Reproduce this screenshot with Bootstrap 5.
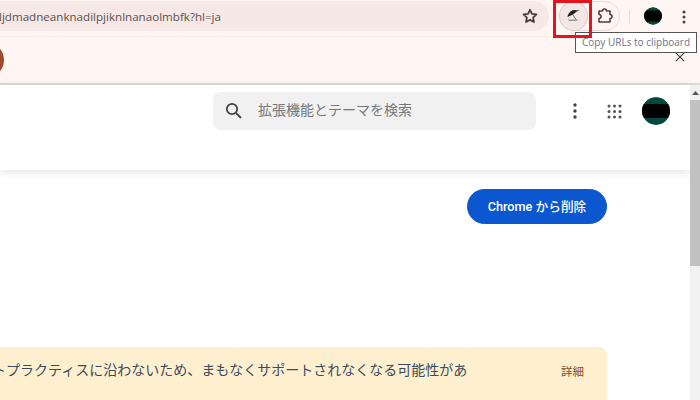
<!DOCTYPE html>
<html lang="ja">
<head>
    <meta charset="UTF-8">
    <title>Chrome Web Store</title>
    <link href="https://cdn.jsdelivr.net/npm/bootstrap@5.3.0/dist/css/bootstrap.min.css" rel="stylesheet">
    <style>
        html, body { height: 400px; overflow: hidden; }
        body { background: #fff; font-family: "Open Sans", "Noto Sans CJK JP", sans-serif; }
        .shell { width: 700px; height: 400px; position: relative; overflow: hidden; }

        /* browser chrome */
        .toolbar { height: 37px; background: #fff5f3; border-bottom: 1px solid #fde9e4; padding-top: 1px; }
        .omnibox { width: 550px; height: 30px; margin-left: -1px; background: #f5e8e6; border-radius: 0 15px 15px 0; padding-right: 8px; overflow: hidden; }
        .omni-url { flex: 1; min-width: 0; padding-top: 2px; font-size: 11.6px; color: #5c4f4d; white-space: nowrap; overflow: hidden; }
        .ext-pill { margin-left: 10px; height: 30px; width: 61px; border: 1px solid #eadcd8; border-radius: 15px; }
        .ext-active { width: 30px; height: 30px; margin: -1px 0 -1px -1px; background: #f3e6e3; border: 1px solid #dccfcb; border-radius: 50%; }
        .ext-puzzle { width: 30px; height: 28px; margin-left: 3px; }
        .tb-sep { width: 1px; height: 14px; background: #f8d5cc; margin: 9px 14px 0 9px; }
        .tb-avatar { width: 18px; height: 18px; margin-top: 6px; border-radius: 50%; }
        .tb-menu { margin: 9px 0 0 20px; width: 4px; }

        .infobar { height: 46px; background: #fff6f4; padding-top: 5px; }
        .info-badge { width: 36px; height: 36px; margin-left: -32px; background: #9c4a2e; border-radius: 50%; }
        .info-close { margin-left: auto; margin-right: 15px; margin-top: 10px; width: 10px; height: 10px; }

        /* tooltip and highlight lie over the toolbar */
        .url-tip { position: absolute; left: 575px; top: 32px; height: 21px; width: 122px; background: #fff; border: 1px solid #555; font-size: 10px; line-height: 19px; text-align: center; color: #6b7488; white-space: nowrap; }
        .red-box { position: absolute; left: 553px; top: 0; width: 39px; height: 38px; border: 3px solid #e5131d; }

        /* page */
        .view { height: 317px; border-top: 2px solid #dcdcdc; }
        .page-main { flex: 1; min-width: 0; }
        .store-head { height: 85px; padding-top: 7px; box-shadow: 0 2px 8px rgba(60, 64, 67, .15); }
        .search-box { margin-left: 213px; width: 323px; height: 38px; background: #f1f1f1; border-radius: 8px; padding-left: 12px; }
        .search-text { margin-left: 15px; padding-bottom: 3px; font-size: 14px; color: #777; }
        .head-tools { margin: 5px 0 0 37px; }
        .head-grid { margin-left: 30px; }
        .head-avatar { margin-left: 20px; width: 28px; height: 28px; border-radius: 50%; }
        .remove-row { width: 607px; padding-top: 19px; }
        .btn-remove { width: 140px; height: 35px; padding: 0; background: #0b57d0; border-color: #0b57d0; border-radius: 18px; font-family: Roboto, "Noto Sans CJK JP", sans-serif; font-size: 12.7px; font-weight: 500; color: #fff; }
        .warn-box { width: 607px; height: 70px; margin-top: 123px; background: #feefcf; border-radius: 0 8px 8px 0; padding: 12px 23px 0 0; font-size: 14px; color: #3c4a5e; white-space: nowrap; }
        .warn-text { flex: 1; min-width: 0; margin-left: -8px; }
        .warn-link { font-size: 11.5px; color: #8f4a2e; margin-top: 4px; margin-left: 20px; }

        .scroll-track { width: 10px; background: #f1f1f1; }
        .scroll-arrow { height: 15px; color: #555; }
        .scroll-thumb { height: 166px; background: #c1c1c1; }
    </style>
</head>
<body>
    <div class="shell">
        <!-- Browser toolbar -->
        <div class="toolbar d-flex align-items-start">
            <div class="omnibox d-flex align-items-center">
                <div class="omni-url">ljdmadneanknadilpjiknlnanaolmbfk?hl=ja</div>
                <svg width="22" height="22" viewBox="0 0 24 24" fill="none" stroke="#4a3f3d" stroke-width="2" stroke-linejoin="round"><path d="M12 5.200l2.100 4.500 4.900.6-3.600 3.400.9 4.900-4.300-2.400-4.300 2.400.9-4.900L5 10.300l4.900-.6z"/></svg>
            </div>
            <div class="ext-pill d-flex align-items-center">
                <div class="ext-active d-flex align-items-center justify-content-center">
                    <svg width="18" height="18" viewBox="0 0 18 18"><path d="M3.500 10C4 6.500 6.500 3.500 10 3l6 .5c-3 .5-5 2-5.500 3L8 8z" fill="#222"/><path d="M9 8l3 4.500" stroke="#666" stroke-width="1"/><path d="M4 12.500h10l-1 1.500H5z" fill="#999"/></svg>
                </div>
                <div class="ext-puzzle d-flex align-items-center justify-content-center">
                    <svg width="18" height="18" viewBox="0 0 18 18" fill="none" stroke="#5a3b35" stroke-width="1.600" stroke-linejoin="round"><path d="M3 4h3.500a2 2 0 0 1 4 0H14v3.500a2 2 0 0 1 0 4V15H3v-3.500a2 2 0 0 0 0-4z"/></svg>
                </div>
            </div>
            <div class="tb-sep"></div>
            <svg class="tb-avatar" viewBox="0 0 18 18"><circle cx="9" cy="9" r="9" fill="#04493a"/><rect y="3.500" width="18" height="11" fill="#000"/></svg>
            <svg class="tb-menu" height="14" viewBox="0 0 4 14" fill="#4a3f3d"><circle cx="2" cy="2" r="1.500"/><circle cx="2" cy="7" r="1.500"/><circle cx="2" cy="12" r="1.500"/></svg>
        </div>

        <!-- Infobar -->
        <div class="infobar d-flex">
            <div class="info-badge"></div>
            <svg class="info-close" viewBox="0 0 12 12" stroke="#444" stroke-width="1.500"><path d="M1 1l10 10M11 1L1 11"/></svg>
        </div>

        <!-- Page -->
        <div class="view d-flex">
            <div class="page-main">
                <div class="store-head d-flex align-items-start">
                    <div class="search-box d-flex align-items-center">
                        <svg width="18" height="18" viewBox="0 0 18 18" fill="none" stroke="#444" stroke-width="1.800"><circle cx="7" cy="7" r="5.200"/><path d="M11 11l5 5"/></svg>
                        <span class="search-text">拡張機能とテーマを検索</span>
                    </div>
                    <div class="head-tools d-flex align-items-center">
                        <svg width="4" height="16" viewBox="0 0 4 16" fill="#444"><circle cx="2" cy="2" r="1.700"/><circle cx="2" cy="8" r="1.700"/><circle cx="2" cy="14" r="1.700"/></svg>
                        <svg class="head-grid" width="15" height="15" viewBox="0 0 15 15" fill="#555"><circle cx="2" cy="2" r="1.500"/><circle cx="7.500" cy="2" r="1.500"/><circle cx="13" cy="2" r="1.500"/><circle cx="2" cy="7.500" r="1.500"/><circle cx="7.500" cy="7.500" r="1.500"/><circle cx="13" cy="7.500" r="1.500"/><circle cx="2" cy="13" r="1.500"/><circle cx="7.500" cy="13" r="1.500"/><circle cx="13" cy="13" r="1.500"/></svg>
                        <svg class="head-avatar" viewBox="0 0 28 28"><circle cx="14" cy="14" r="14" fill="#04493a"/><rect y="7" width="28" height="14" fill="#000"/></svg>
                    </div>
                </div>
                <div class="remove-row d-flex justify-content-end">
                    <button type="button" class="btn btn-primary btn-remove">Chrome から削除</button>
                </div>
                <div class="warn-box d-flex align-items-start">
                    <div class="warn-text">トプラクティスに沿わないため、まもなくサポートされなくなる可能性があ</div>
                    <span class="warn-link">詳細</span>
                </div>
            </div>
            <div class="scroll-track">
                <div class="scroll-arrow d-flex justify-content-center align-items-center">
                    <svg width="7" height="4" viewBox="0 0 7 4" fill="#555"><path d="M3.500 0L7 4H0z"/></svg>
                </div>
                <div class="scroll-thumb"></div>
            </div>
        </div>

        <div class="url-tip">Copy URLs to clipboard</div>
        <div class="red-box"></div>
    </div>
    <script src="https://cdn.jsdelivr.net/npm/bootstrap@5.3.0/dist/js/bootstrap.bundle.min.js"></script>
</body>
</html>
